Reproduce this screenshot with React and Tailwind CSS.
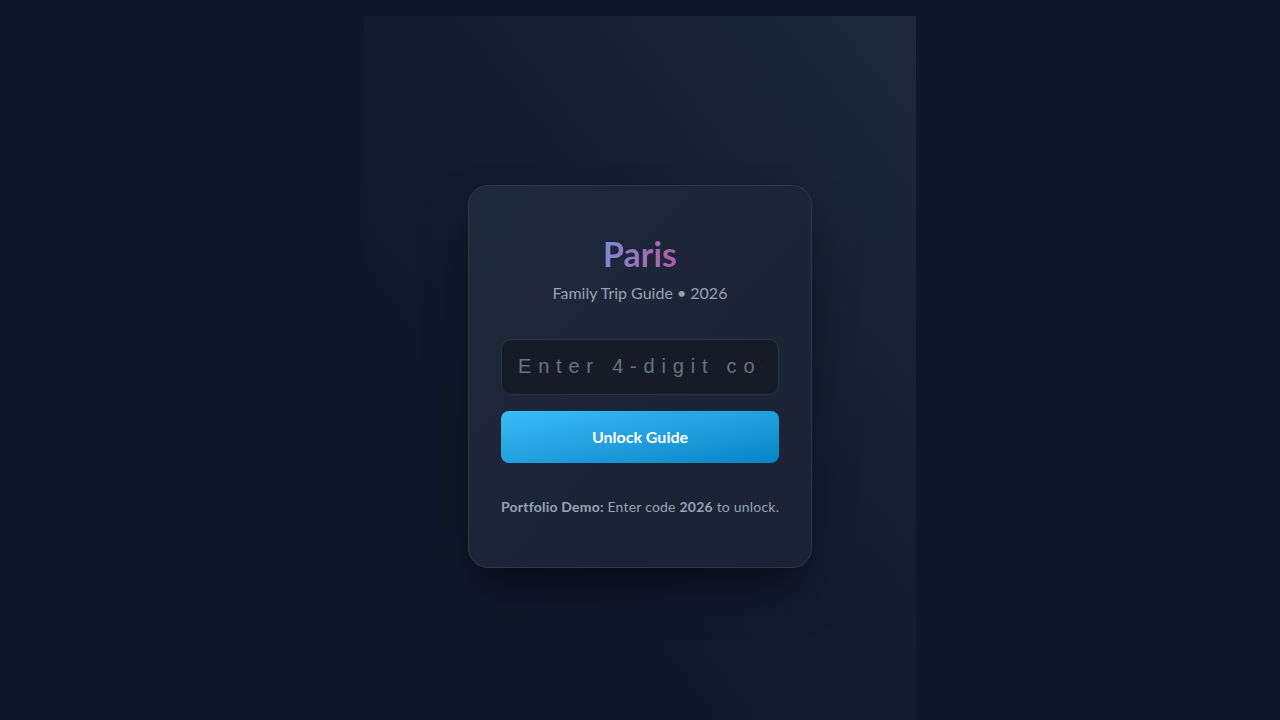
export default function App() {
    return (
        <div className="min-h-screen bg-[#0f172a] flex justify-center pt-4" style={{ fontFamily: 'Lato, "Noto Sans", sans-serif' }}>
            <div className="w-[552px] h-[704px] bg-linear-to-tr from-[#0f172a] from-30% via-[#151d31] via-60% to-[#1e293b] flex items-center justify-center pt-4">
                {/* Card */}
                <div className="w-[344px] rounded-[20px] border border-[#2d3748] bg-linear-to-br from-[#1e293b] to-[#1a2233] px-8 pt-[49px] pb-[50px] shadow-[0_25px_50px_-12px_rgba(0,0,0,0.6)] text-center">
                    <h1 className="text-[34px] leading-[38px] font-bold bg-linear-to-r from-[#7b8ad4] to-[#b457a8] bg-clip-text text-transparent inline-block">
                        Paris
                    </h1>
                    <p className="text-[16px] text-[#94a3b8] mt-[8px]">Family Trip Guide • 2026</p>

                    <input
                        type="text"
                        placeholder="Enter 4-digit code"
                        className="mt-[34px] w-full h-[56px] rounded-[10px] bg-[#151c28] border border-[#2a3344] px-4 text-xl tracking-[0.34em] text-white placeholder:text-[#6b7280] outline-none"
                        style={{ fontFamily: '"Liberation Sans", Arial, sans-serif' }}
                    />

                    <button className="mt-4 w-full h-[52px] rounded-lg bg-linear-to-br from-[#38bdf8] to-[#0284c7] text-white font-bold text-base">
                        Unlock Guide
                    </button>

                    <p className="mt-[34px] text-sm tracking-[0.015em] whitespace-nowrap text-[#94a3b8]">
                        <span className="font-bold">Portfolio Demo:</span> Enter code <span className="font-bold">2026</span> to unlock.
                    </p>
                </div>
            </div>
        </div>
    );
}
